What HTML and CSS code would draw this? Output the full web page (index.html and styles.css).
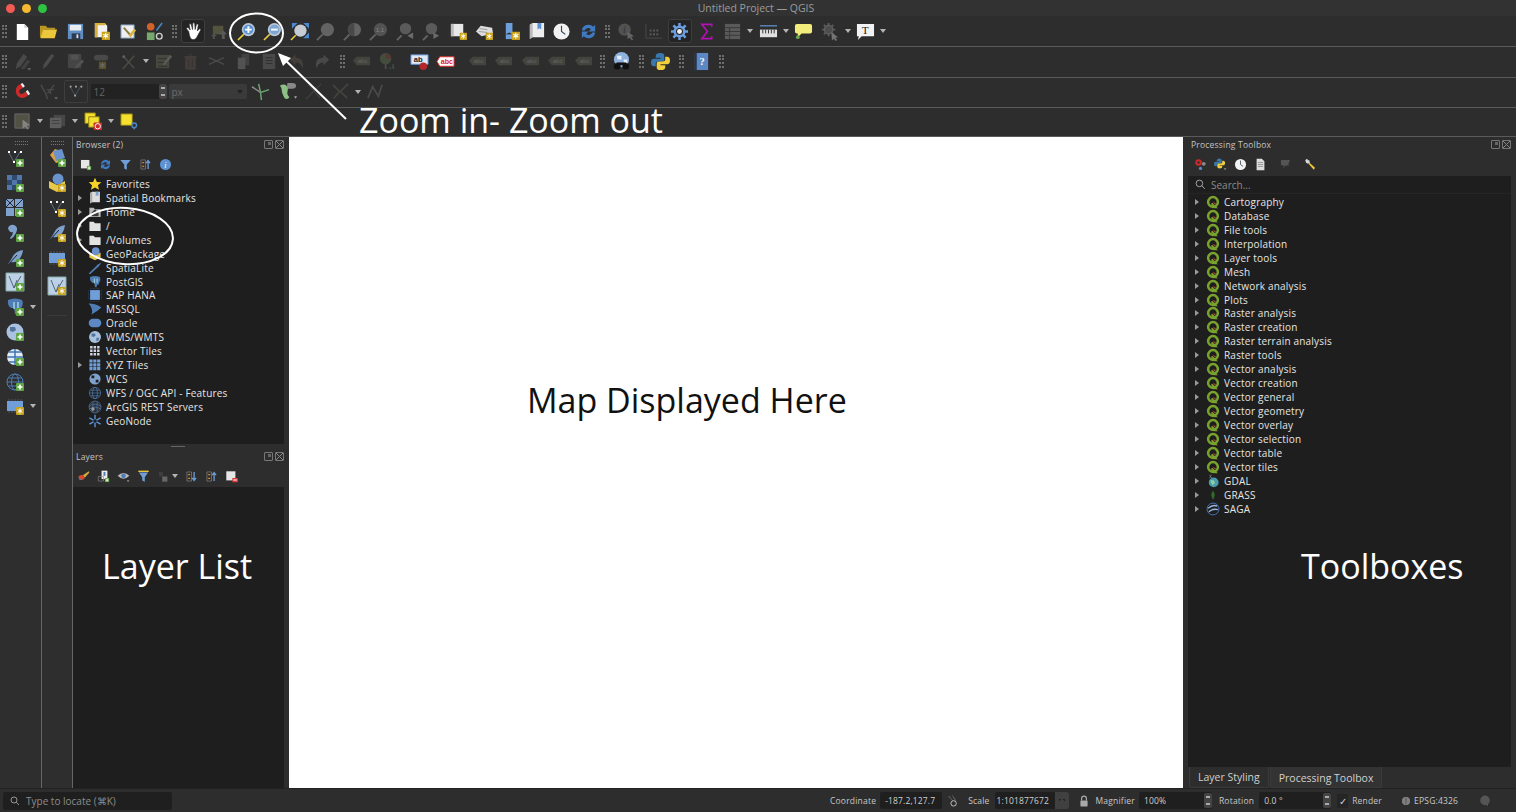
FILE: index.html
```html
<!DOCTYPE html>
<html lang="en">
<head>
  <meta charset="UTF-8">
  <title>Untitled Project — QGIS</title>
  <link rel="stylesheet" href="styles.css">
</head>
<body>
  <svg class="defs" width="0" height="0">
    <!-- badges -->
    <symbol id="b-plus" viewBox="0 0 8 8"><rect width="8" height="8" rx="1" fill="#5fa544"/><path d="M4 1.5v5M1.5 4h5" stroke="#fff" stroke-width="1.6"/></symbol>
    <symbol id="b-star" viewBox="0 0 8 8"><rect width="8" height="8" rx="1" fill="#c9a21c"/><path d="M4 1.2v5.6M1.6 2.6l4.8 2.8M1.6 5.4l4.8-2.8" stroke="#fff" stroke-width="1"/></symbol>
    <symbol id="b-minus" viewBox="0 0 8 8"><rect width="8" height="6" y="1" rx="1" fill="#d9363e"/><path d="M1.5 4h5" stroke="#fff" stroke-width="1.5"/></symbol>

    <!-- main toolbar -->
    <symbol id="new" viewBox="0 0 20 20"><path d="M4 2h8l4 4v13H4z" fill="#fff"/><path d="M12 2v4h4" fill="#ccc"/></symbol>
    <symbol id="open" viewBox="0 0 20 20"><path d="M1 4h6l2 2h8v2H5L3 16H1z" fill="#b8961f"/><path d="M4.500 8H19l-2.500 9H1.500z" fill="#ecc93a"/></symbol>
    <symbol id="save" viewBox="0 0 20 20"><path d="M2 2h16v16H2z" fill="#5f8fc4"/><path d="M4 3h12v6H4z" fill="#e9edf2"/><path d="M6 12h9v6H6z" fill="#2c3a4c"/><path d="M11 13h2v4h-2z" fill="#dde"/></symbol>
    <symbol id="layoutnew" viewBox="0 0 20 20"><path d="M3 1h10l3 3v12H3z" fill="#f2f2f2"/><path d="M3 1h3v15H3zM6 1h8v2.500H6z" fill="#d7b03a"/><use href="#b-star" x="10" y="10" width="9" height="9"/></symbol>
    <symbol id="layouts" viewBox="0 0 20 20"><path d="M2 3h14v14H2z" fill="#eee" stroke="#6d86a8"/><path d="M5 6l8 9" stroke="#8a7a42" stroke-width="2"/><path d="M10 14l6-7 2 2-6 7z" fill="#dcb53a"/></symbol>
    <symbol id="style" viewBox="0 0 20 20"><circle cx="6" cy="5" r="4" fill="#d2622a"/><path d="M12 9l6-8" stroke="#4d86c6" stroke-width="1.600"/><path d="M2 11h8v8H2z" fill="#78a86e"/><circle cx="15" cy="15" r="3" fill="none" stroke="#ccc" stroke-width="1.500"/></symbol>
    <symbol id="pan" viewBox="0 0 20 20"><path d="M5 10L3 7.500c-1-1.500 1-2.500 2-1l1.500 2L5.500 3c0-1.500 2-1.500 2.200 0L9 8l.2-6c0-1.500 2-1.500 2.100 0l.4 6 1.300-5c.4-1.400 2.300-1 2 .5L14 9.500l1.800-2c1-1 2.400 0 1.600 1.300L14 15c-1 2.500-2.500 3.500-4.500 3.500C7 18.500 6 16 5 10z" fill="#fff" stroke="#222" stroke-width=".6"/></symbol>
    <symbol id="pansel" viewBox="0 0 20 20"><path d="M3 4h11v9H3z" fill="#7a7a52"/><path d="M14 9l4 4h-2.500v5h-3v-5H10z" fill="#888"/><path d="M4 12l-3 3h2v3h2v-3h2z" fill="#777"/></symbol>
    <symbol id="zin" viewBox="0 0 20 20"><path d="M1 19l6-6" stroke="#f0d23c" stroke-width="1.600"/><circle cx="12" cy="8" r="7" fill="#b9c6d6"/><circle cx="12" cy="8" r="5.200" fill="#5c93d4"/><path d="M12 4.500v7M8.500 8h7" stroke="#fff" stroke-width="2"/></symbol>
    <symbol id="zout" viewBox="0 0 20 20"><path d="M1 19l6-6" stroke="#f0d23c" stroke-width="1.600"/><circle cx="12" cy="8" r="7" fill="#b9c6d6"/><circle cx="12" cy="8" r="5.200" fill="#7ea6d4"/><path d="M8.500 8h7" stroke="#fff" stroke-width="2"/></symbol>
    <symbol id="zfull" viewBox="0 0 20 20"><path d="M1 19l5-5" stroke="#f0d23c" stroke-width="1.600"/><circle cx="11" cy="9" r="6.500" fill="#c6ccd4"/><path d="M2 1h6L2 7zM20 1h-6l6 6zM20 17h-6l6-6z" fill="#4b88cf"/></symbol>
    <symbol id="zsel" viewBox="0 0 20 20"><path d="M1 19l6-6" stroke="#999" stroke-width="2"/><circle cx="12" cy="8" r="7" fill="#999"/></symbol>
    <symbol id="zlayer" viewBox="0 0 20 20"><path d="M1 19l6-6" stroke="#999" stroke-width="2"/><circle cx="12" cy="8" r="7" fill="#999"/><path d="M12 1a7 7 0 000 14z" fill="#666"/></symbol>
    <symbol id="znat" viewBox="0 0 20 20"><path d="M1 19l6-6" stroke="#999" stroke-width="2"/><circle cx="12" cy="8" r="7" fill="#777"/></symbol>
    <symbol id="zlast" viewBox="0 0 20 20"><path d="M1 19l5-5" stroke="#999" stroke-width="2"/><circle cx="10" cy="7" r="6" fill="#888"/><path d="M18 11v7l-6-3.500z" fill="#aaa"/></symbol>
    <symbol id="znext" viewBox="0 0 20 20"><path d="M1 19l5-5" stroke="#999" stroke-width="2"/><circle cx="10" cy="7" r="6" fill="#888"/><path d="M12 11v7l6-3.500z" fill="#aaa"/></symbol>
    <symbol id="mapnew" viewBox="0 0 20 20"><path d="M2 2h13v13H2z" fill="#e8e8e8"/><path d="M2 2h3v13H2z" fill="#bbb"/><use href="#b-star" x="11" y="11" width="8" height="8"/></symbol>
    <symbol id="map3d" viewBox="0 0 20 20"><path d="M1 10l5-6 12 2 1 6-12 3z" fill="#ddd"/><path d="M5 7l8 1M4 10l9 1" stroke="#999"/><use href="#b-star" x="11" y="11" width="8" height="8"/></symbol>
    <symbol id="booknew" viewBox="0 0 20 20"><path d="M4 1h7v12l-3.500-2L4 13z" fill="#6e9fdc"/><path d="M4 13h8v5H4z" fill="#6e9fdc"/><use href="#b-star" x="10" y="10" width="9" height="9"/></symbol>
    <symbol id="bookshow" viewBox="0 0 20 20"><path d="M3 3l3-2h12v15H5l-2 2z" fill="#eee"/><path d="M3 3l3-2v15l-3 2z" fill="#bbb"/><path d="M11 1h4v7l-2-1.500L11 8z" fill="#5c93d4"/></symbol>
    <symbol id="clock" viewBox="0 0 20 20"><circle cx="10" cy="10" r="8.500" fill="#f2f2f2"/><path d="M10 4v6l4 3" stroke="#345" stroke-width="1.200" fill="none"/></symbol>
    <symbol id="refresh" viewBox="0 0 20 20"><path d="M3 9a7 7 0 0112-4l2-2v7h-7l2.500-2.500A4 4 0 006 9z" fill="#3f79c0"/><path d="M17 11a7 7 0 01-12 4l-2 2v-7h7l-2.500 2.500A4 4 0 0014 11z" fill="#3f79c0"/></symbol>
    <symbol id="identify" viewBox="0 0 20 20"><circle cx="8" cy="8" r="6.500" fill="#777"/><path d="M11 10l7 5-3 .5 2 3-1.500 1-2-3L11 18z" fill="#999"/></symbol>
    <symbol id="attr" viewBox="0 0 20 20"><g fill="#8a8a8a"><rect x="6" y="8" width="2" height="2"/><rect x="9.500" y="8" width="2" height="2"/><rect x="13" y="8" width="2" height="2"/><rect x="6" y="12" width="2" height="2"/><rect x="9.500" y="12" width="2" height="2"/><rect x="13" y="12" width="2" height="2"/></g><path d="M2 2v15h17" fill="none" stroke="#666"/></symbol>
    <symbol id="gear" viewBox="0 0 20 20"><path d="M10 1v4M10 15v4M1 10h4M15 10h4M3.600 3.600l3 3M13.400 13.400l3 3M3.600 16.400l3-3M13.400 6.600l3-3" stroke="#6c9ee0" stroke-width="2.600"/><circle cx="10" cy="10" r="5" fill="none" stroke="#6c9ee0" stroke-width="2.600"/><circle cx="10" cy="10" r="2.600" fill="#f0f0f0"/></symbol>
    <symbol id="sigma" viewBox="0 0 20 20"><path d="M15.500 5V2.500H5L11 10l-6 7.500h10.500V15" fill="none" stroke="#b311b3" stroke-width="1.700"/></symbol>
    <symbol id="table" viewBox="0 0 20 20"><path d="M2 2h16v16H2z" fill="#666"/><path d="M2 6h16M2 10h16M2 14h16M7 6v12" stroke="#3a3a3a"/></symbol>
    <symbol id="ruler" viewBox="0 0 20 20"><path d="M1 4h18" stroke="#5c86ba" stroke-width="1.500"/><path d="M1 8h18v8H1z" fill="#e0e0e0"/><path d="M4 8v4M7 8v4M10 8v4M13 8v4M16 8v4" stroke="#333"/></symbol>
    <symbol id="tip" viewBox="0 0 20 20"><path d="M3 2h14q2 0 2 2v6q0 2-2 2H8l-4 4v-4H3q-2 0-2-2V4q0-2 2-2z" fill="#f2ec7a"/><circle cx="4" cy="16" r="2" fill="#6aa84f"/></symbol>
    <symbol id="action" viewBox="0 0 20 20"><path d="M8 1v3M8 12v3M1 8h3M12 8h3M3 3l2 2M11 11l2 2M3 13l2-2M11 5l2-2" stroke="#666" stroke-width="2"/><circle cx="8" cy="8" r="4.500" fill="#555" stroke="#777"/><path d="M11 11l7 5-3 .5 2 2.500-1.500 1-2-2.500-2 2z" fill="#888"/></symbol>
    <symbol id="annot" viewBox="0 0 20 20"><path d="M1 2h18v13H6l-4 4 1-4H1z" fill="#f2f2f2"/></symbol>

    <!-- digitizing, labels -->
    <symbol id="edits" viewBox="0 0 20 20"><path d="M3 18l1-6 7-10 4 3-7 10z" fill="#666"/><path d="M8 18l7-10 3 2-6 8z" fill="#555"/><path d="M15 17h4l-2 2.500z" fill="#aaa"/></symbol>
    <symbol id="pencil" viewBox="0 0 20 20"><path d="M4 18l1-5 8-11 3 2-8 11z" fill="#6a6a6a"/></symbol>
    <symbol id="saveedit" viewBox="0 0 20 20"><path d="M2 2h14v15H2z" fill="#5e5e5e"/><path d="M5 3h8v5H5z" fill="#777"/><path d="M9 18l2-4 6-6 2 2-6 6z" fill="#777"/></symbol>
    <symbol id="digit" viewBox="0 0 20 20"><path d="M2 6q0-3 5-3h6q4 0 4 3t-4 3H7Q2 9 2 6z" fill="#666"/><use href="#b-star" x="7" y="10" width="8" height="8" opacity=".6"/></symbol>
    <symbol id="vertex" viewBox="0 0 20 20"><path d="M4 18L16 4M6 6l10 11" stroke="#6a6a5a" stroke-width="1.600"/><circle cx="5" cy="5" r="1.500" fill="#999"/></symbol>
    <symbol id="modattr" viewBox="0 0 20 20"><path d="M2 3h14v14H2z" fill="#5f6650"/><path d="M4 7h10M4 11h10M4 15h10" stroke="#333"/><path d="M9 13l8-10 2 2-8 9z" fill="#888"/></symbol>
    <symbol id="trash" viewBox="0 0 20 20"><path d="M3 5h14M8 3h4M5 5h10v13H5z" fill="#5a4a44" stroke="#5f4f48"/><path d="M8 8v8M12 8v8" stroke="#3a3a3a"/></symbol>
    <symbol id="cut" viewBox="0 0 20 20"><path d="M2 6l16 7M2 13l16-7" stroke="#666" stroke-width="1.500"/></symbol>
    <symbol id="copy" viewBox="0 0 20 20"><path d="M8 2h8v12H8z" fill="#555"/><path d="M4 6h8v12H4z" fill="#777"/></symbol>
    <symbol id="paste" viewBox="0 0 20 20"><path d="M3 2h13v16H3z" fill="#666"/><path d="M6 6h7M6 9h7M6 12h7" stroke="#333"/></symbol>
    <symbol id="undo" viewBox="0 0 20 20"><path d="M3 8l6-5v3q8 0 8 7 0 2-1 4-1-6-7-6v3z" fill="#5a5048"/></symbol>
    <symbol id="redo" viewBox="0 0 20 20"><path d="M17 8l-6-5v3q-8 0-8 7 0 2 1 4 1-6 7-6v3z" fill="#666"/></symbol>
    <symbol id="lab" viewBox="0 0 20 20"><path d="M1 9l4-4h14v9H5z" fill="#5b5b50"/></symbol>
    <symbol id="diagram" viewBox="0 0 20 20"><circle cx="8" cy="7" r="6" fill="#5c6b4a"/><path d="M8 7V1a6 6 0 016 6z" fill="#7a4a3a"/><path d="M7 12v6h2v-6z" fill="#666"/><path d="M12 16h2v2h-2zM15 13h2v5h-2z" fill="#4a6a5a"/></symbol>
    <symbol id="labpin" viewBox="0 0 20 20"><path d="M1 3h18v10H1z" fill="#dfe8f4" stroke="#5c93d4"/><circle cx="14" cy="15" r="4" fill="#b2262c"/></symbol>
    <symbol id="labred" viewBox="0 0 20 20"><path d="M1 10l3-5h15v10H4z" fill="#fff" stroke="#e02a2a"/></symbol>
    <symbol id="scope" viewBox="0 0 20 20"><circle cx="10" cy="8" r="8" fill="#8fb2dc"/><path d="M5 4h5v4H6zM12 8h4v4h-3z" fill="#e4edf7"/><circle cx="5.500" cy="15" r="3.500" fill="#111"/><circle cx="14.500" cy="15" r="3.500" fill="#111"/><path d="M5 11h10v3H5z" fill="#111"/></symbol>
    <symbol id="python" viewBox="0 0 20 20"><path d="M10 1q-5 0-5 3v2h5v1H3q-3 0-3 4t3 4h2v-3q0-2 3-2h4q2 0 2-2V4q0-3-4-3z" fill="#3a78b0"/><path d="M10 19q5 0 5-3v-2h-5v-1h7q3 0 3-4t-3-4h-2v3q0 2-3 2H8q-2 0-2 2v4q0 3 4 3z" fill="#f0cf3e"/></symbol>
    <symbol id="help" viewBox="0 0 20 20"><path d="M3 1h14v18H3z" fill="#5c89c4"/><path d="M3 1h2v18H3z" fill="#25344a"/></symbol>

    <!-- snapping, shape digitizing, selection -->
    <symbol id="magnet" viewBox="0 0 20 20"><path d="M3 9a7 7 0 0010 7l3-2-2.500-4-3 2a2.500 2.500 0 01-3-4l3-2L8 2 5 4a7 7 0 00-2 5z" fill="#cc2a2a"/><path d="M8 2l2.500 4 2-1.500L10 1zM13.500 10l2.500 4 2-1.500-2.500-4z" fill="#eee"/></symbol>
    <symbol id="snapv" viewBox="0 0 20 20"><path d="M2 3l5 9 2 6M16 3l-7 9M8 8h8M12 8v5" fill="none" stroke="#666" stroke-width="1.500"/><path d="M16 16h4l-2 2.500z" fill="#aaa"/></symbol>
    <symbol id="topo" viewBox="0 0 20 20"><path d="M10 11L8 2M10 11l9-3M10 11l1 8" stroke="#6aa26e" stroke-width="1.600"/><path d="M1 5l9 6" stroke="#888" stroke-width="1.600"/></symbol>
    <symbol id="avoid" viewBox="0 0 20 20"><path d="M10 1h5q4 0 4 3t-4 3H9z" fill="#888"/><path d="M2 4q4-3 7 0 2 3 1 6t2 6q-2 3-5 1-3-5-3-8T2 4z" fill="#8cc084"/><path d="M17 15h3l-1.500 2.500z" fill="#aaa"/></symbol>
    <symbol id="cross1" viewBox="0 0 20 20"><path d="M2 18L18 2M5 3l12 14" stroke="#555" stroke-width="1.300"/></symbol>
    <symbol id="cross2" viewBox="0 0 20 20"><path d="M2 3l7 7-6 7M18 2l-8 8 7 7" stroke="#5a5a50" stroke-width="1.800" fill="none"/></symbol>
    <symbol id="trace" viewBox="0 0 20 20"><path d="M2 17l5-12 6 10 4-12" fill="none" stroke="#666" stroke-width="1.800"/></symbol>
    <symbol id="selbox" viewBox="0 0 20 20"><path d="M2 2h15v15H2z" fill="#5c5c4a" stroke="#777"/><path d="M10 8l8 6-3.500.5 2 3-1.500 1-2-3-3 2z" fill="#999"/></symbol>
    <symbol id="sellayers" viewBox="0 0 20 20"><path d="M6 3h12v12H6z" fill="#4e4e4e"/><path d="M2 6h12v11H2z" fill="#6a6a6a"/><path d="M4 9h8M4 12h8" stroke="#444"/></symbol>
    <symbol id="deselect" viewBox="0 0 20 20"><path d="M1 1h11v11H1z" fill="#f5e030" stroke="#8a7a10"/><path d="M5 5h11v11H5z" fill="#f5e030" stroke="#8a7a10"/><rect x="10" y="11" width="9" height="8" rx="1" fill="#c9302c"/><circle cx="14.500" cy="15" r="2.800" fill="none" stroke="#fff"/></symbol>
    <symbol id="selloc" viewBox="0 0 20 20"><path d="M2 2h12v12H2z" fill="#f5e030" stroke="#8a7a10"/><circle cx="16" cy="14" r="2.500" fill="none" stroke="#4a88c8" stroke-width="1.500"/><path d="M14.500 16l1.500 3 1.500-3z" fill="#4a88c8"/></symbol>

    <!-- data source toolbars -->
    <symbol id="dsm" viewBox="0 0 20 20"><path d="M3 7l5-6 6 2 1 10-6 2z" fill="#e0a040"/><path d="M6 3l9-2 3 9-9 3z" fill="#6a92cc"/><use href="#b-plus" x="11" y="11" width="8" height="8"/></symbol>
    <symbol id="gpkg" viewBox="0 0 20 20"><path d="M2 8l8 4 8-4v7l-8 4-8-4z" fill="#e6c84a"/><circle cx="11" cy="6" r="5.500" fill="#6a92cc"/></symbol>
    <symbol id="pts" viewBox="0 0 20 20"><path d="M4 5l5 9M15 4l-6 10" stroke="#5f6f84"/><g fill="#fff"><rect x="3" y="3" width="2" height="2"/><rect x="9" y="3" width="2" height="2"/><rect x="15" y="3" width="2" height="2"/><rect x="8" y="13" width="2" height="2"/></g></symbol>
    <symbol id="raster" viewBox="0 0 20 20"><path d="M2 2h5v5H2zM12 2h5v5h-5zM7 7h5v5H7zM2 12h5v5H2zM12 12h4v5h-4z" fill="#5078ac"/><path d="M7 2h5v5H7zM2 7h5v5H2zM12 7h5v5h-5zM7 12h5v5H7z" fill="#2f4a6c"/></symbol>
    <symbol id="mesh" viewBox="0 0 20 20"><path d="M1 1h8v8H1zM10 1h8v8h-8zM1 10h8v8H1zM10 10h8v8h-8z" fill="#7fa2cc"/><path d="M1 1l8 8M9 1L1 9M10 9l8-8" stroke="#223"/></symbol>
    <symbol id="hook" viewBox="0 0 20 20"><path d="M3 5q2-4 6-3 5 2 2 8-2 4-5 6l-1-1q3-3 3-6-4 1-5-4z" fill="#7fa2cc"/></symbol>
    <symbol id="feather" viewBox="0 0 20 20"><path d="M2 18L7 10q3-7 11-8-1 8-6 11-3 2-6 1z" fill="#7fa2cc"/><path d="M2 18L12 7" stroke="#223"/></symbol>
    <symbol id="chip" viewBox="0 0 20 20"><path d="M2 5h16v10H2z" fill="#6f9ed8"/><path d="M4 3v2M7 3v2M10 3v2M13 3v2M16 3v2M4 15v2M7 15v2M10 15v2M13 15v2M16 15v2" stroke="#555"/></symbol>
    <symbol id="vmesh" viewBox="0 0 20 20"><path d="M1 1h18v18H1z" fill="#bcd0e6" stroke="#8aa"/><path d="M4 4l5 12 7-12M9 16l3-8" fill="none" stroke="#567"/></symbol>
    <symbol id="pg" viewBox="0 0 20 20"><path d="M3 3q7-3 14 0 2 4-1 8l-1 3h-2l-1 4-2-1-1-6H6Q2 8 3 3z" fill="#4f7cb4"/><path d="M9 5v7M13 5v6" stroke="#cfe" stroke-width="1"/></symbol>
    <symbol id="globe" viewBox="0 0 20 20"><circle cx="10" cy="10" r="8.500" fill="#a9c2e0"/><path d="M5 5h5l1 3-3 2-3-1zM12 11h4l-1 4-3 1z" fill="#54749c"/></symbol>
    <symbol id="wcsg" viewBox="0 0 20 20"><circle cx="10" cy="10" r="8" fill="#e4edf7"/><path d="M2 10h16M4 5h12M4 15h12M10 2v16" stroke="#3f74b4" stroke-width="1.500"/></symbol>
    <symbol id="wfsg" viewBox="0 0 20 20"><circle cx="10" cy="10" r="8" fill="none" stroke="#4f7cb4"/><ellipse cx="10" cy="10" rx="3.500" ry="8" fill="none" stroke="#4f7cb4"/><path d="M2 10h16M3.500 6h13M3.500 14h13" stroke="#4f7cb4"/></symbol>

    <!-- browser tree -->
    <symbol id="star" viewBox="0 0 20 20"><path d="M10 1l2.700 6 6.300.6-4.800 4.200 1.500 6.500L10 15l-5.700 3.300 1.500-6.500L1 7.600 7.300 7z" fill="#f5d327"/></symbol>
    <symbol id="folder" viewBox="0 0 20 20"><path d="M2 4h6l2 2h8v11H2z" fill="#e2e2e2"/></symbol>
    <symbol id="home" viewBox="0 0 20 20"><path d="M2 4h6l2 2h8v11H2z" fill="#bcbcbc"/><path d="M5 11l5-5 5 5v5H5z" fill="#3a3a3a"/></symbol>
    <symbol id="bm" viewBox="0 0 20 20"><path d="M3 3l3-2h11v15H5l-2 2z" fill="#ddd"/><path d="M3 3l3-2v15l-3 2z" fill="#aaa"/><path d="M11 1h4v6l-2-1-2 1z" fill="#7fa2cc"/></symbol>
    <symbol id="spatialite" viewBox="0 0 20 20"><path d="M1 18L14 5l5-3-3 5L3 19z" fill="#4f7cb4"/></symbol>
    <symbol id="hana" viewBox="0 0 20 20"><path d="M3 3h14v14H3z" fill="#6f9ed8"/><path d="M1 3v14M19 3v14M3 1h14M3 19h14" stroke="#3f5a7c" stroke-dasharray="1 1"/></symbol>
    <symbol id="mssql" viewBox="0 0 20 20"><path d="M1 2q11 0 18 6-6 6-14 10 3-8-4-16z" fill="#4f7cb4"/></symbol>
    <symbol id="oracle" viewBox="0 0 20 20"><rect x="1" y="4" width="18" height="12" rx="6" fill="#5c89c4"/></symbol>
    <symbol id="grid3" viewBox="0 0 20 20"><path d="M3 3h3.500v3.500H3zM8 3h3.500v3.500H8zM13 3h3.500v3.500H13zM3 8h3.500v3.500H3zM8 8h3.500v3.500H8zM13 8h3.500v3.500H13zM3 13h3.500v3.500H3zM8 13h3.500v3.500H8zM13 13h3.500v3.500H13z" fill="#cfd6e0"/></symbol>
    <symbol id="grid4" viewBox="0 0 20 20"><path d="M2 2h4.500v4.500H2zM7.500 2H12v4.500H7.500zM13 2h4.500v4.500H13zM2 7.500h4.500V12H2zM7.500 7.500H12V12H7.500zM13 7.500h4.500V12H13zM2 13h4.500v4.500H2zM7.500 13H12v4.500H7.500zM13 13h4.500v4.500H13z" fill="#6f9ed8"/></symbol>
    <symbol id="wcs" viewBox="0 0 20 20"><circle cx="10" cy="10" r="8" fill="#7fa2cc"/><path d="M5 5h4v4H5zM11 11h4v4h-4z" fill="#1e1e1e"/></symbol>
    <symbol id="arcgis" viewBox="0 0 20 20"><circle cx="10" cy="10" r="8.500" fill="#24303e" stroke="#5f7a9c"/><path d="M2 9q8-6 16 0M2 13q8-6 16 0M7 3v14M13 3v14" stroke="#5f7a9c" fill="none"/><circle cx="7" cy="13" r="2.500" fill="#999"/></symbol>
    <symbol id="geonode" viewBox="0 0 20 20"><path d="M10 1v18M2 5.500l16 9M2 14.500l16-9" stroke="#5c93d4" stroke-width="2"/><circle cx="10" cy="10" r="2.500" fill="#1e1e1e"/></symbol>

    <!-- dock toolbars -->
    <symbol id="addgroup" viewBox="0 0 20 20"><path d="M3 3h13v13H3z" fill="#e6e6e6"/><use href="#b-plus" x="12" y="12" width="7" height="7"/></symbol>
    <symbol id="funnel" viewBox="0 0 20 20"><path d="M2 3h16l-6 7v8l-4-2v-6z" fill="#6f9ed8"/></symbol>
    <symbol id="funnely" viewBox="0 0 20 20"><path d="M2 2h16" stroke="#f0d23c" stroke-width="2"/><path d="M3 4h14l-5 7v7l-4-2v-5z" fill="#6f9ed8"/></symbol>
    <symbol id="collapse" viewBox="0 0 20 20"><path d="M3 3h7v14H3z" fill="none" stroke="#888"/><path d="M5 6h3v2H5zM5 12h3v2H5z" fill="#e08a2a"/><path d="M14 17V6M11 8l3-4 3 4" fill="none" stroke="#6f9ed8" stroke-width="2"/></symbol>
    <symbol id="expand" viewBox="0 0 20 20"><path d="M3 3h7v14H3z" fill="none" stroke="#888"/><path d="M5 6h3v2H5zM5 12h3v2H5z" fill="#e08a2a"/><path d="M14 3v11M11 12l3 4 3-4" fill="none" stroke="#6f9ed8" stroke-width="2"/></symbol>
    <symbol id="info" viewBox="0 0 20 20"><circle cx="10" cy="10" r="8.500" fill="#5c93d4"/></symbol>
    <symbol id="brush" viewBox="0 0 20 20"><path d="M9 8l9-6 1 2-7 8z" fill="#d4a838"/><path d="M2 10q4-3 7-2l3 4q-2 5-8 3z" fill="#d44a2a"/><path d="M2 12l6 3q-4 2-6-3z" fill="#4a7cc0"/></symbol>
    <symbol id="addlayer" viewBox="0 0 20 20"><path d="M7 1h9v13H7z" fill="#eee"/><path d="M10 3h3v6h-3z" fill="#4f7cb4"/><path d="M2 10h8v7H2z" fill="none" stroke="#888"/><use href="#b-plus" x="12" y="12" width="7" height="7"/></symbol>
    <symbol id="eye" viewBox="0 0 20 20"><path d="M1 9q9-9 18 0-9 9-18 0z" fill="#bbb"/><circle cx="10" cy="9" r="3.500" fill="#4f7cb4"/><path d="M15 16h4l-2 2z" fill="#ccc"/></symbol>
    <symbol id="filtdis" viewBox="0 0 20 20"><path d="M3 3h6v7H3z" fill="#3e3e3e"/><path d="M8 10h8v8H8z" fill="#666"/></symbol>
    <symbol id="remove" viewBox="0 0 20 20"><path d="M2 2h14v14H2z" fill="#e6e6e6"/><use href="#b-minus" x="11" y="11" width="9" height="9"/></symbol>
    <symbol id="gears" viewBox="0 0 20 20"><circle cx="7" cy="7" r="5" fill="#cc2a2a"/><circle cx="7" cy="7" r="2" fill="#333"/><circle cx="15" cy="9" r="3" fill="#888"/><circle cx="10" cy="16" r="2.500" fill="#5c89c4"/></symbol>
    <symbol id="pyd" viewBox="0 0 20 20"><use href="#python" width="17" height="17"/><path d="M15 16h4l-2 2z" fill="#ccc"/></symbol>
    <symbol id="doc" viewBox="0 0 20 20"><path d="M4 1h8l4 4v14H4z" fill="#ddd"/><path d="M6 7h8M6 10h8M6 13h8" stroke="#777"/></symbol>
    <symbol id="flag" viewBox="0 0 20 20"><path d="M3 3h14l-3 7 3 1-8 1-2 5v-6H3z" fill="#555"/></symbol>
    <symbol id="wrench" viewBox="0 0 20 20"><path d="M8 7l9 8-2 3-8-9z" fill="#ecc93a"/><path d="M2 3l3-2 1 3 2-1 1 4-3 2-3-2z" fill="#ddd"/></symbol>

    <!-- processing tree -->
    <symbol id="qgis" viewBox="0 0 20 20"><circle cx="10" cy="10" r="7" fill="none" stroke="#7aa32e" stroke-width="3.600"/><path d="M9 11l8 8h-5l-5-6z" fill="#7aa32e"/><path d="M10 10l2 3 3-1" fill="#c44"/></symbol>
    <symbol id="gdal" viewBox="0 0 20 20"><circle cx="11" cy="12" r="7" fill="#4a9ab0"/><path d="M6 9h5l2 4-4 3z" fill="#8fd0a0"/><path d="M5 1l3 5M8 1L5 6" stroke="#888"/></symbol>
    <symbol id="grass" viewBox="0 0 20 20"><path d="M10 4q5 5 0 13-5-8 0-13z" fill="#2f6a2a"/></symbol>
    <symbol id="saga" viewBox="0 0 20 20"><circle cx="10" cy="10" r="8.500" fill="none" stroke="#4e80c8" stroke-width="1.200"/><path d="M3 9q7-6 13-3M4 14q6-5 13-3" fill="none" stroke="#9ab8e4" stroke-width="2"/></symbol>

    <!-- status bar -->
    <symbol id="search" viewBox="0 0 20 20"><circle cx="8" cy="8" r="6" fill="none" stroke="#aaa" stroke-width="1.700"/><path d="M12.500 12.500L18 18" stroke="#aaa" stroke-width="1.700"/></symbol>
    <symbol id="toggle" viewBox="0 0 20 20"><path d="M3 2l7 8M9 1l6 9" stroke="#ccc" stroke-dasharray="1.500 1"/><circle cx="11" cy="14" r="4.500" fill="none" stroke="#ccc" stroke-width="1.500"/></symbol>
    <symbol id="lock" viewBox="0 0 20 20"><path d="M6 9V6a4 4 0 018 0v3" fill="none" stroke="#aaa" stroke-width="2"/><rect x="4" y="9" width="12" height="10" rx="1" fill="#aaa"/></symbol>
    <symbol id="epsg" viewBox="0 0 20 20"><circle cx="10" cy="10" r="8" fill="#999"/><path d="M2 10h16M3.500 6h13M3.500 14h13M10 2v16" stroke="#333"/></symbol>
    <symbol id="bubble" viewBox="0 0 20 20"><circle cx="10" cy="9" r="8" fill="#555"/><path d="M10 14l5 5v-7z" fill="#555"/></symbol>
  </svg>

  <div class="titlebar">
    <span class="light red"></span><span class="light amber"></span><span class="light green"></span>
    <span class="title-text">Untitled Project — QGIS</span>
  </div>

  <div class="tb-row row1">
    <span class="hd first"></span>
    <span class="ib"><svg><use href="#new"/></svg></span>
    <span class="ib"><svg><use href="#open"/></svg></span>
    <span class="ib"><svg><use href="#save"/></svg></span>
    <span class="ib"><svg><use href="#layoutnew"/></svg></span>
    <span class="ib"><svg><use href="#layouts"/></svg></span>
    <span class="ib"><svg viewBox="0 0 20 20"><use href="#style"/></svg></span>
    <span class="hd"></span>
    <span class="ib checked"><svg><use href="#pan"/></svg></span>
    <span class="ib off"><svg><use href="#pansel"/></svg></span>
    <span class="ib"><svg><use href="#zin"/></svg></span>
    <span class="ib"><svg><use href="#zout"/></svg></span>
    <span class="ib"><svg><use href="#zfull"/></svg></span>
    <span class="ib off"><svg><use href="#zsel"/></svg></span>
    <span class="ib off"><svg><use href="#zlayer"/></svg></span>
    <span class="ib off"><svg viewBox="0 0 20 20"><use href="#znat"/><text class="gl" x="7" y="10.500" font-size="6.500" fill="#ddd">1:1</text></svg></span>
    <span class="ib off"><svg><use href="#zlast"/></svg></span>
    <span class="ib off"><svg><use href="#znext"/></svg></span>
    <span class="ib"><svg><use href="#mapnew"/></svg></span>
    <span class="ib"><svg><use href="#map3d"/></svg></span>
    <span class="ib"><svg><use href="#booknew"/></svg></span>
    <span class="ib narrow"><svg><use href="#bookshow"/></svg></span>
    <span class="ib"><svg><use href="#clock"/></svg></span>
    <span class="ib"><svg><use href="#refresh"/></svg></span>
    <span class="hd"></span>
    <span class="ib off"><svg viewBox="0 0 20 20"><use href="#identify"/><text class="gl-serif" x="6.300" y="12" font-size="10" font-style="italic" fill="#333">i</text></svg></span>
    <span class="ib off"><svg><use href="#attr"/></svg></span>
    <span class="ib checked"><svg><use href="#gear"/></svg></span>
    <span class="ib"><svg><use href="#sigma"/></svg></span>
    <span class="ib off-mid"><svg><use href="#table"/></svg></span><i class="drop"></i>
    <span class="ib"><svg><use href="#ruler"/></svg></span><i class="drop"></i>
    <span class="ib"><svg><use href="#tip"/></svg></span>
    <span class="ib off-mid"><svg><use href="#action"/></svg></span><i class="drop"></i>
    <span class="ib"><svg viewBox="0 0 20 20"><use href="#annot"/><text class="gl-serif" x="6" y="12.500" font-size="12" fill="#222">T</text></svg></span><i class="drop"></i>
  </div>

  <div class="tb-row row2">
    <span class="hd first"></span>
    <span class="ib off"><svg><use href="#edits"/></svg></span>
    <span class="ib off"><svg><use href="#pencil"/></svg></span>
    <span class="ib off"><svg><use href="#saveedit"/></svg></span>
    <span class="ib off"><svg><use href="#digit"/></svg></span>
    <span class="ib off"><svg><use href="#vertex"/></svg></span><i class="drop"></i>
    <span class="ib off"><svg><use href="#modattr"/></svg></span>
    <span class="ib off"><svg><use href="#trash"/></svg></span>
    <span class="ib off"><svg><use href="#cut"/></svg></span>
    <span class="ib off"><svg><use href="#copy"/></svg></span>
    <span class="ib off"><svg><use href="#paste"/></svg></span>
    <span class="ib off"><svg><use href="#undo"/></svg></span>
    <span class="ib off"><svg><use href="#redo"/></svg></span>
    <span class="hd"></span>
    <span class="ib off"><svg viewBox="0 0 20 20"><use href="#lab"/><text class="gl" x="6" y="12" font-size="6.500" fill="#999">abc</text></svg></span>
    <span class="ib off"><svg><use href="#diagram"/></svg></span>
    <span class="ib sep-left"><svg viewBox="0 0 20 20"><use href="#labpin"/><text class="gl" x="4" y="11" font-size="8" font-weight="700" fill="#222">ab</text></svg></span>
    <span class="ib"><svg viewBox="0 0 20 20"><use href="#labred"/><text class="gl" x="5" y="13" font-size="7.500" font-weight="700" fill="#d22">abc</text></svg></span>
    <span class="ib off sep-left"><svg viewBox="0 0 20 20"><use href="#lab"/><text class="gl" x="6" y="12" font-size="6.500" fill="#999">abc</text></svg></span>
    <span class="ib off"><svg viewBox="0 0 20 20"><use href="#lab"/><text class="gl" x="6" y="12" font-size="6.500" fill="#999">abc</text></svg></span>
    <span class="ib off"><svg viewBox="0 0 20 20"><use href="#lab"/><text class="gl" x="6" y="12" font-size="6.500" fill="#999">abc</text></svg></span>
    <span class="ib off"><svg viewBox="0 0 20 20"><use href="#lab"/><text class="gl" x="6" y="12" font-size="6.500" fill="#999">abc</text></svg></span>
    <span class="ib off"><svg viewBox="0 0 20 20"><use href="#lab"/><text class="gl" x="6" y="12" font-size="6.500" fill="#999">abc</text></svg></span>
    <span class="hd"></span>
    <span class="ib"><svg><use href="#scope"/></svg></span>
    <span class="hd"></span>
    <span class="ib"><svg><use href="#python"/></svg></span>
    <span class="hd help-hd"></span>
    <span class="ib"><svg viewBox="0 0 20 20"><use href="#help"/><text class="gl-serif" x="8" y="14" font-size="11" font-weight="700" fill="#fff">?</text></svg></span>
    <span class="hd"></span>
  </div>

  <div class="tb-row row3">
    <span class="hd first"></span>
    <span class="ib"><svg><use href="#magnet"/></svg></span>
    <span class="ib off"><svg><use href="#snapv"/></svg></span>
    <span class="pts-box"><svg><use href="#pts"/></svg></span>
    <span class="spin-input"><span>12</span><i class="spin"></i></span>
    <span class="combo">px<i class="drop"></i></span>
    <span class="ib"><svg><use href="#topo"/></svg></span>
    <span class="ib"><svg><use href="#avoid"/></svg></span>
    <span class="ib off"><svg><use href="#cross1"/></svg></span>
    <span class="ib off"><svg><use href="#cross2"/></svg></span><i class="drop"></i>
    <span class="ib off"><svg><use href="#trace"/></svg></span>
  </div>

  <div class="tb-row row4">
    <span class="hd first"></span>
    <span class="ib off-mid"><svg><use href="#selbox"/></svg></span><i class="drop"></i>
    <span class="ib off-mid"><svg><use href="#sellayers"/></svg></span><i class="drop"></i>
    <span class="ib"><svg><use href="#deselect"/></svg></span><i class="drop"></i>
    <span class="ib"><svg><use href="#selloc"/></svg></span>
  </div>

  <div class="main">
    <div class="side-tb col1">
      <span class="hd-h"></span>
      <span class="sb"><svg><use href="#pts"/><use href="#b-plus" x="11" y="11" width="8" height="8"/></svg></span>
      <span class="sb"><svg><use href="#raster"/><use href="#b-plus" x="11" y="11" width="8" height="8"/></svg></span>
      <span class="sb"><svg><use href="#mesh"/><use href="#b-plus" x="11" y="11" width="8" height="8"/></svg></span>
      <span class="sb"><svg><use href="#hook"/><use href="#b-plus" x="11" y="11" width="8" height="8"/></svg></span>
      <span class="sb"><svg><use href="#feather"/><use href="#b-plus" x="11" y="11" width="8" height="8"/></svg></span>
      <span class="sb"><svg><use href="#vmesh"/><use href="#b-plus" x="11" y="11" width="8" height="8"/></svg></span>
      <span class="sb"><svg><use href="#pg"/><use href="#b-plus" x="11" y="11" width="8" height="8"/></svg><i class="drop"></i></span>
      <span class="sb"><svg><use href="#globe"/><use href="#b-plus" x="11" y="11" width="8" height="8"/></svg></span>
      <span class="sb"><svg><use href="#wcsg"/><use href="#b-plus" x="11" y="11" width="8" height="8"/></svg></span>
      <span class="sb"><svg><use href="#wfsg"/><use href="#b-plus" x="11" y="11" width="8" height="8"/></svg></span>
      <span class="sb"><svg><use href="#chip"/><use href="#b-star" x="11" y="11" width="8" height="8"/></svg><i class="drop"></i></span>
    </div>
    <div class="side-tb col2">
      <span class="hd-h"></span>
      <span class="sb"><svg><use href="#dsm"/></svg></span>
      <span class="sb"><svg><use href="#gpkg"/><use href="#b-star" x="11" y="11" width="8" height="8"/></svg></span>
      <span class="sb"><svg><use href="#pts"/><use href="#b-star" x="11" y="11" width="8" height="8"/></svg></span>
      <span class="sb"><svg><use href="#feather"/><use href="#b-star" x="11" y="11" width="8" height="8"/></svg></span>
      <span class="sb"><svg><use href="#chip"/><use href="#b-star" x="11" y="11" width="8" height="8"/></svg></span>
      <span class="sb last"><svg><use href="#vmesh"/><use href="#b-star" x="11" y="11" width="8" height="8"/></svg></span>
    </div>

    <div class="dock left-dock">
      <div class="dock-title"><span>Browser (2)</span><span class="dock-btns"><i class="float"></i><i class="close"></i></span></div>
      <div class="dock-tools browser-tools">
        <span class="tool"><svg><use href="#addgroup"/></svg></span>
        <span class="tool"><svg><use href="#refresh"/></svg></span>
        <span class="tool"><svg><use href="#funnel"/></svg></span>
        <span class="tool"><svg><use href="#collapse"/></svg></span>
        <span class="tool"><svg viewBox="0 0 20 20"><use href="#info"/><text class="gl-serif" x="8" y="15" font-size="13" font-style="italic" fill="#fff">i</text></svg></span>
      </div>
      <ul class="tree browser-tree">
        <li><svg><use href="#star"/></svg>Favorites</li>
        <li class="more"><svg><use href="#bm"/></svg>Spatial Bookmarks</li>
        <li class="more"><svg><use href="#home"/></svg>Home</li>
        <li class="more"><svg><use href="#folder"/></svg>/</li>
        <li class="more"><svg><use href="#folder"/></svg>/Volumes</li>
        <li><svg><use href="#gpkg"/></svg>GeoPackage</li>
        <li><svg><use href="#spatialite"/></svg>SpatiaLite</li>
        <li><svg><use href="#pg"/></svg>PostGIS</li>
        <li><svg><use href="#hana"/></svg>SAP HANA</li>
        <li><svg><use href="#mssql"/></svg>MSSQL</li>
        <li><svg><use href="#oracle"/></svg>Oracle</li>
        <li><svg><use href="#globe"/></svg>WMS/WMTS</li>
        <li><svg><use href="#grid3"/></svg>Vector Tiles</li>
        <li class="more"><svg><use href="#grid4"/></svg>XYZ Tiles</li>
        <li><svg><use href="#wcs"/></svg>WCS</li>
        <li><svg><use href="#wfsg"/></svg>WFS / OGC API - Features</li>
        <li><svg><use href="#arcgis"/></svg>ArcGIS REST Servers</li>
        <li><svg><use href="#geonode"/></svg>GeoNode</li>
      </ul>
      <div class="split"></div>
      <div class="dock-title"><span>Layers</span><span class="dock-btns"><i class="float"></i><i class="close"></i></span></div>
      <div class="dock-tools layer-tools">
        <span class="tool"><svg><use href="#brush"/></svg></span>
        <span class="tool"><svg><use href="#addlayer"/></svg></span>
        <span class="tool"><svg><use href="#eye"/></svg></span>
        <span class="tool"><svg><use href="#funnely"/></svg></span>
        <span class="tool"><svg><use href="#filtdis"/></svg></span><i class="drop"></i>
        <span class="tool"><svg><use href="#expand"/></svg></span>
        <span class="tool"><svg><use href="#collapse"/></svg></span>
        <span class="tool"><svg><use href="#remove"/></svg></span>
      </div>
      <div class="tree layer-list"></div>
    </div>

    <div class="map"></div>

    <div class="dock right-dock">
      <div class="dock-title"><span>Processing Toolbox</span><span class="dock-btns"><i class="float"></i><i class="close"></i></span></div>
      <div class="dock-tools proc-tools">
        <span class="tool"><svg><use href="#gears"/></svg></span>
        <span class="tool"><svg><use href="#pyd"/></svg></span>
        <span class="tool"><svg><use href="#clock"/></svg></span>
        <span class="tool"><svg><use href="#doc"/></svg></span>
        <span class="tool flag"><svg><use href="#flag"/></svg></span>
        <span class="tool wrench"><svg><use href="#wrench"/></svg></span>
      </div>
      <div class="proc-search"><svg><use href="#search"/></svg>Search...</div>
      <ul class="tree proc-tree">
        <li class="more"><svg><use href="#qgis"/></svg>Cartography</li>
        <li class="more"><svg><use href="#qgis"/></svg>Database</li>
        <li class="more"><svg><use href="#qgis"/></svg>File tools</li>
        <li class="more"><svg><use href="#qgis"/></svg>Interpolation</li>
        <li class="more"><svg><use href="#qgis"/></svg>Layer tools</li>
        <li class="more"><svg><use href="#qgis"/></svg>Mesh</li>
        <li class="more"><svg><use href="#qgis"/></svg>Network analysis</li>
        <li class="more"><svg><use href="#qgis"/></svg>Plots</li>
        <li class="more"><svg><use href="#qgis"/></svg>Raster analysis</li>
        <li class="more"><svg><use href="#qgis"/></svg>Raster creation</li>
        <li class="more"><svg><use href="#qgis"/></svg>Raster terrain analysis</li>
        <li class="more"><svg><use href="#qgis"/></svg>Raster tools</li>
        <li class="more"><svg><use href="#qgis"/></svg>Vector analysis</li>
        <li class="more"><svg><use href="#qgis"/></svg>Vector creation</li>
        <li class="more"><svg><use href="#qgis"/></svg>Vector general</li>
        <li class="more"><svg><use href="#qgis"/></svg>Vector geometry</li>
        <li class="more"><svg><use href="#qgis"/></svg>Vector overlay</li>
        <li class="more"><svg><use href="#qgis"/></svg>Vector selection</li>
        <li class="more"><svg><use href="#qgis"/></svg>Vector table</li>
        <li class="more"><svg><use href="#qgis"/></svg>Vector tiles</li>
        <li class="more"><svg><use href="#gdal"/></svg>GDAL</li>
        <li class="more"><svg><use href="#grass"/></svg>GRASS</li>
        <li class="more"><svg><use href="#saga"/></svg>SAGA</li>
      </ul>
      <div class="tabs">
        <span class="tab">Layer Styling</span>
        <span class="tab active">Processing Toolbox</span>
      </div>
    </div>
  </div>

  <div class="statusbar">
    <div class="locator"><svg><use href="#search"/></svg>Type to locate (⌘K)</div>
    <div class="status-items">
      <span class="lbl">Coordinate</span>
      <span class="field coord">-187.2,127.7</span>
      <svg class="st-ic toggle"><use href="#toggle"/></svg>
      <span class="lbl">Scale</span>
      <span class="field scale">1:101877672<i class="scale-btn"></i></span>
      <svg class="st-ic lock"><use href="#lock"/></svg>
      <span class="lbl">Magnifier</span>
      <span class="field mag">100%<i class="spin"></i></span>
      <span class="lbl rot">Rotation</span>
      <span class="field rotation">0.0 °<i class="spin"></i></span>
      <span class="check">✓</span>
      <span class="lbl">Render</span>
      <svg class="st-ic epsg"><use href="#epsg"/></svg>
      <span class="lbl">EPSG:4326</span>
      <svg class="st-ic bubble"><use href="#bubble"/></svg>
    </div>
  </div>

  <!-- hand drawn notes on top of the screenshot -->
  <svg class="notes" width="1516" height="812">
    <ellipse cx="256.500" cy="33" rx="26.500" ry="19.500" fill="none" stroke="#fff" stroke-width="2"/>
    <ellipse cx="125" cy="236" rx="48" ry="28" fill="none" stroke="#fff" stroke-width="2" transform="rotate(4 125 236)"/>
    <path d="M346 119L281 56" stroke="#fff" stroke-width="2"/>
    <path d="M278 53l13 5-8 8z" fill="#fff"/>
  </svg>
  <span class="note zoom-note">Zoom in- Zoom out</span>
  <span class="note map-note">Map Displayed Here</span>
  <span class="note layer-note">Layer List</span>
  <span class="note tool-note">Toolboxes</span>
</body>
</html>
```

FILE: styles.css
```css
html, body {
  margin: 0;
  height: 812px;
  overflow: hidden;
}

body {
  position: relative;
  display: flex;
  flex-direction: column;
  background: #2d2d2d;
  font-family: "Open Sans", "Liberation Sans", sans-serif;
  font-size: 10px;
  color: #e4e4e4;
}

.defs {
  position: absolute;
}

.gl { font-family: "Liberation Sans", sans-serif; }
.gl-serif { font-family: "Liberation Serif", serif; }

/* title bar */
.titlebar {
  position: relative;
  display: flex;
  align-items: center;
  gap: 7px;
  height: 16px;
  padding-left: 6px;
  box-sizing: border-box;
  background: #323232;
}

.light {
  width: 9px;
  height: 9px;
  border-radius: 50%;
}

.red { background: #f25a54; }
.amber { background: #f5b82e; }
.green { background: #2fc243; }

.title-text {
  position: absolute;
  left: 0;
  right: 4px;
  text-align: center;
  color: #9c9c9c;
  font-size: 10.5px;
}

/* toolbars */
.tb-row {
  display: flex;
  align-items: center;
  box-sizing: border-box;
  border-bottom: 1px solid #5a5a5a;
  background: #2d2d2d;
}

.row1 { height: 31px; }
.row2 { height: 31px; padding-bottom: 2px; }
.row3 { height: 30px; padding-bottom: 2px; }
.row4 { height: 29px; padding-bottom: 2px; }

.ib {
  display: flex;
  flex: none;
  align-items: center;
  justify-content: center;
  width: 26.5px;
  height: 24px;
  box-sizing: border-box;
}

.ib svg {
  width: 19px;
  height: 19px;
}

.ib.narrow { width: 24px; }
.ib.off svg { opacity: 0.5; }
.ib.off-mid svg { opacity: 0.8; }
.ib.sep-left { margin-left: 5px; }

.ib.checked {
  background: #242424;
  border: 1px solid #3e3e3e;
  border-radius: 3px;
  width: 24px;
  margin: 0 1.25px;
}

.hd {
  display: flex;
  flex: none;
  justify-content: center;
  width: 12px;
}

.hd::before {
  content: "";
  width: 1px;
  height: 13px;
  border-left: 2px dotted #6e6e6e;
  border-right: 2px dotted #6e6e6e;
}

.hd.first { width: 9px; }
.hd.help-hd { width: 15px; }

.drop {
  flex: none;
  width: 0;
  height: 0;
  margin: 0 2px 0 1px;
  border: 3px solid transparent;
  border-top: 4px solid #b4b4b4;
  border-bottom: 0;
}

.pts-box {
  display: flex;
  align-items: center;
  justify-content: center;
  width: 24px;
  height: 23px;
  margin-left: 1.500px;
  border: 1px solid #3e3e3e;
  border-radius: 2px;
  box-sizing: border-box;
}

.pts-box svg {
  width: 18px;
  height: 18px;
  opacity: 0.6;
}

.spin-input {
  display: flex;
  align-items: center;
  justify-content: space-between;
  width: 76px;
  height: 15px;
  margin-left: 3px;
  color: #666;
  font-size: 10px;
  background: #222;
}

.spin-input span { padding-left: 3px; }

.spin {
  flex: none;
  width: 8px;
  height: 15px;
  margin-left: 2px;
  background:
    linear-gradient(#aaa, #aaa) center 3px / 4px 2px no-repeat,
    linear-gradient(#aaa, #aaa) center 10px / 4px 2px no-repeat,
    #444;
  border-radius: 2px;
}

.combo {
  display: flex;
  align-items: center;
  justify-content: space-between;
  width: 78px;
  height: 15px;
  margin: 0 1px 0 2px;
  padding: 0 2px 0 3px;
  box-sizing: border-box;
  color: #6c6c6c;
  font-size: 10px;
  background: #3a3a3a;
  border-radius: 2px;
}

.combo .drop { border-top-color: #222; }

/* main area */
.main {
  display: flex;
  flex: 1;
  min-height: 0;
}

.side-tb {
  display: flex;
  flex: none;
  flex-direction: column;
  box-sizing: border-box;
  border-right: 1px solid #666;
  background: #2e2e2e;
}

.col1 { width: 42px; padding-left: 3px; }
.col2 { width: 31px; align-items: center; }

.hd-h {
  flex: none;
  width: 13px;
  height: 4px;
  margin: 4px 0 1px;
  border-top: 1px dotted #777;
  border-bottom: 1px dotted #777;
  box-sizing: border-box;
}

.col1 .hd-h { margin-left: 12px; }

.sb {
  display: flex;
  flex: none;
  align-items: center;
  height: 24.800px;
}

.sb svg {
  width: 20px;
  height: 20px;
}

.sb.last { margin-top: 4px; padding-bottom: 16px; border-bottom: 1px solid #3a3a3a; }
.sb .drop { margin-left: 5px; }
.col1 .sb svg { margin-left: 2px; overflow: visible; }

/* docks */
.dock {
  display: flex;
  flex: none;
  flex-direction: column;
  box-sizing: border-box;
  background: #2d2d2d;
}

.left-dock {
  width: 216px;
  padding-right: 5.500px;
  position: relative;
}

.right-dock {
  width: 333px;
  padding: 0 5px;
}

.dock-title {
  display: flex;
  flex: none;
  align-items: center;
  justify-content: space-between;
  height: 16px;
  padding: 0 0 2px 3px;
  box-sizing: border-box;
  color: #c4c4c4;
  font-size: 8.500px;
  letter-spacing: 0.2px;
}

.dock-btns {
  display: flex;
  gap: 2px;
}

.float, .close {
  display: block;
  width: 7px;
  height: 7px;
  border: 1px solid #777;
  border-radius: 1px;
}

.close {
  background:
    linear-gradient(45deg, transparent 46%, #888 46% 54%, transparent 54%),
    linear-gradient(-45deg, transparent 46%, #888 46% 54%, transparent 54%);
}

.float {
  background: linear-gradient(#666, #666) 3px 1px / 3px 3px no-repeat;
}

.dock-tools {
  display: flex;
  flex: none;
  align-items: center;
  height: 23px;
}

.tool {
  display: flex;
  flex: none;
  align-items: center;
  justify-content: center;
  width: 20px;
}

.tool svg {
  width: 13px;
  height: 13px;
}

.browser-tools { padding-left: 2px; }
.layer-tools { height: 22px; }
.layer-tools .drop { margin: 0 3px 0 -1px; }
.proc-tools { padding-left: 2px; }
.tool.flag { margin-left: 5px; }
.tool.wrench { margin-left: 5px; }

.tree {
  margin: 0;
  padding: 1px 0 0;
  list-style: none;
  background: #1e1e1e;
  color: #e6e6e6;
  font-size: 10px;
  letter-spacing: 0.2px;
}

.tree li {
  position: relative;
  display: flex;
  align-items: center;
  height: 13.940px;
  white-space: nowrap;
}

.tree li svg {
  flex: none;
  width: 14px;
  height: 14px;
  margin-right: 4px;
}

.tree li.more::before {
  content: "";
  position: absolute;
  border: 3px solid transparent;
  border-left: 4px solid #9a9a9a;
  border-right: 0;
}

.browser-tree {
  height: 268px;
  flex: none;
  box-sizing: border-box;
  padding-left: 15px;
}

.browser-tree li.more::before { left: -10px; }

.split {
  flex: none;
  height: 5px;
  background: linear-gradient(#666, #666) center 2px / 14px 1px no-repeat;
}

.layer-list { flex: 1; }

.map {
  flex: 1;
  background: #fff;
}

.proc-search {
  display: flex;
  flex: none;
  align-items: center;
  height: 17px;
  background: #1e1e1e;
  border-bottom: 1px solid #252525;
  color: #8c8c8c;
  font-size: 10px;
}

.proc-search svg {
  width: 11px;
  height: 11px;
  margin: 0 5px 0 7px;
}

.proc-tree {
  flex: 1;
  padding-left: 18px;
}

.proc-tree li.more::before { left: -11px; }

.tabs {
  display: flex;
  flex: none;
  gap: 1px;
  height: 21px;
  margin-left: 1px;
}

.tab {
  display: flex;
  align-items: center;
  padding: 0 8px;
  color: #d0d0d0;
  font-size: 10.500px;
  border: 1px solid #3a3a3a;
  border-top: 0;
  border-radius: 0 0 2px 2px;
  box-sizing: border-box;
}

.tab.active {
  background: #333;
  padding: 1px 8px 0;
}

/* status bar */
.statusbar {
  display: flex;
  flex: none;
  align-items: center;
  justify-content: space-between;
  height: 24px;
  padding-left: 3px;
  box-sizing: border-box;
  background: #2d2d2d;
  border-top: 1px solid #222;
}

.locator {
  display: flex;
  align-items: center;
  width: 169px;
  height: 18px;
  background: #1f1f1f;
  border-radius: 2px;
  color: #8c8c8c;
  font-size: 10px;
}

.locator svg {
  width: 10px;
  height: 10px;
  margin: 0 6px 0 7px;
}

.status-items {
  display: flex;
  align-items: center;
  width: 686px;
  height: 18px;
  color: #c8c8c8;
}

.lbl {
  font-size: 8.500px;
  letter-spacing: 0.2px;
  white-space: nowrap;
}

.field {
  display: flex;
  align-items: center;
  justify-content: space-between;
  height: 17px;
  padding-left: 5px;
  box-sizing: border-box;
  background: #1f1f1f;
  color: #cfcfcf;
  font-size: 8.500px;
  letter-spacing: 0.15px;
  border-radius: 2px;
}

.coord { width: 62px; margin-left: 4px; }
.scale { width: 74px; margin-left: 5px; padding-left: 2px; }
.mag { width: 73px; margin-left: 4px; }
.rotation { width: 72px; margin-left: 5px; }

.scale-btn {
  width: 14px;
  height: 17px;
  background:
    linear-gradient(135deg, #222 50%, transparent 50%) 4px 7px / 3px 3px no-repeat,
    linear-gradient(-135deg, #222 50%, transparent 50%) 7px 7px / 3px 3px no-repeat,
    #404040;
  border-radius: 0 2px 2px 0;
}

.st-ic {
  flex: none;
  width: 12px;
  height: 12px;
}

.toggle { margin: 0 9px 0 5px; }
.lock { margin: 0 6px 0 9px; }
.rot { margin-left: 7px; }
.epsg { width: 10px; height: 10px; margin: 0 3px 0 19px; }
.bubble { margin-left: 21px; }

.check {
  width: 11px;
  height: 14px;
  margin: 0 4px 0 6px;
  background: #252525;
  color: #ccc;
  font-size: 10px;
  line-height: 14px;
  text-align: center;
}

/* notes drawn over the app */
.notes {
  position: absolute;
  left: 0;
  top: 0;
  pointer-events: none;
}

.note {
  position: absolute;
  white-space: nowrap;
  line-height: 1;
  font-size: 34px;
}

.zoom-note { left: 359px; top: 103px; color: #fff; }
.map-note { left: 527px; top: 383px; color: #111; }
.layer-note { left: 102px; top: 549px; color: #fff; }
.tool-note { left: 1301px; top: 549px; color: #fff; }
```
